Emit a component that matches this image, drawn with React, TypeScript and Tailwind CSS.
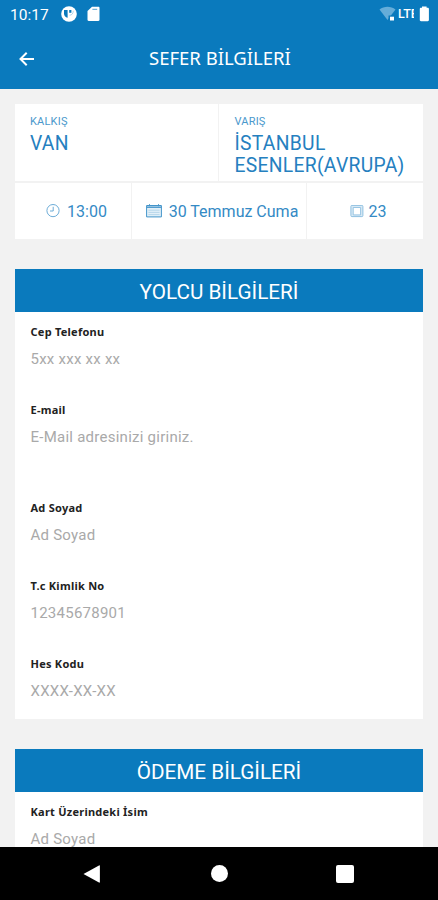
import React from 'react';

interface FieldProps {
  label: string;
  placeholder: string;
  className?: string;
}

const Field: React.FC<FieldProps> = ({ label, placeholder, className = '' }) => (
  <div className={`h-[78px] pl-[15.5px] ${className}`}>
    <p className="h-4 font-['Noto_Sans',sans-serif] text-[11px] leading-4 font-bold tracking-[0.25px] text-[#222222]">{label}</p>
    <p className="mt-[7px] h-6 text-[15px] leading-6 tracking-[0.25px] text-[#a9a9a9]">{placeholder}</p>
  </div>
);

const SectionTitle: React.FC<{ children: React.ReactNode }> = ({ children }) => (
  <h2 className="flex h-[43px] items-center justify-center bg-[#0a7abd] pt-[3px] text-[20.7px] leading-6 text-white">
    {children}
  </h2>
);

// Android status bar
const StatusBar = () => (
  <div className="flex h-7 items-center pl-[10px] text-white">
    <span className="w-[51px] pt-px text-[15.5px] leading-5">10:17</span>
    <svg className="h-4 w-4" viewBox="0 0 16 16" fill="none">
      <circle cx="8" cy="8" r="7.8" fill="#fff" />
      <path d="M3 4h3.6v7.7A4.3 4.3 0 0 1 3 7.6z" fill="#0a7abd" />
      <path d="M8.2 4h2.2v2.8H8.2z" fill="#0a7abd" />
      <path d="M8.6 9.2c2.2 0 3.6-1.6 3.7-4.4" stroke="#0a7abd" strokeWidth="0.5" opacity="0.6" />
    </svg>
    <svg className="ml-[10px] h-4 w-[13px]" viewBox="0 0 13 16">
      <path d="M5 .7h6.4c.6 0 1.1.5 1.1 1.1v12c0 .7-.5 1.2-1.1 1.2H1.7c-.7 0-1.2-.5-1.2-1.2V5z" fill="#fff" />
      <path d="M5.4 3.3h4.8" stroke="#0a7abd" strokeWidth="1" opacity="0.7" />
    </svg>
    <div className="ml-auto flex items-center pr-[8px]">
      <svg className="h-4 w-[17px]" viewBox="0 0 17 16">
        <path d="M.5 3.4C5-.2 12-.2 16.5 3.4L8.5 14z" fill="#65add9" />
        <path d="M9.5 9.5h6v6h-6z" fill="#0a7abd" />
        <path d="M11 10.7h4v3.8h-4z" fill="#fff" />
      </svg>
      <span className="ml-[2px] w-4 overflow-hidden text-[12.5px] leading-4 font-medium">LTE</span>
      <svg className="ml-[5px] h-4 w-[11px]" viewBox="0 0 11 16">
        <path d="M3 .4h4.6v1.4h1.1c.7 0 1.2.5 1.2 1.2v11c0 .7-.5 1.2-1.2 1.2H2c-.7 0-1.2-.5-1.2-1.2V3c0-.7.5-1.2 1.2-1.2h1z" fill="#fff" />
      </svg>
    </div>
  </div>
);

const ClockIcon = () => (
  <svg className="h-[14px] w-[14px]" viewBox="0 0 14 14" fill="none" stroke="#5ca3d2" strokeWidth="0.9">
    <circle cx="7" cy="6.6" r="6.1" />
    <path d="M7.2 2.8v4.2H4" />
  </svg>
);

const CalendarIcon = () => (
  <svg className="h-[14px] w-4" viewBox="0 0 16 14" fill="none" stroke="#4394ca">
    <path d="M.6 1.5h14.8v11.4H.6z" fill="#e3f0f8" />
    <path d="M.6 3.2h14.8" strokeWidth="1.4" />
    <path d="M3.5.2v2M12.5.2v2" />
    <path d="M2.4 6.2h11.2M2.4 8.4h11.2M2.4 10.6h11.2" strokeWidth="0.8" opacity="0.35" />
  </svg>
);

// Two stacked rounded squares
const SeatIcon = () => (
  <svg className="h-[13px] w-[14px]" viewBox="0 0 14 13" fill="none" stroke="#8fc0e0">
    <rect x="0.9" y="0.4" width="12" height="11.2" rx="1" fill="#d9eaf5" />
    <path d="M3.2 2.5h7.4v7.4H3.2z" strokeWidth="0.9" fill="#fff" />
  </svg>
);

const TripCard = () => (
  <div className="w-[408px] text-[#2580bf]">
    <div className="flex h-[77px] gap-px">
      <div className="w-[203px] bg-white pt-[10px] pl-[15px]">
        <p className="h-[19px] text-[11px] leading-4 tracking-[0.2px] text-[#4a98cc]">KALKIŞ</p>
        <p className="text-[19.3px] leading-[22px] tracking-[0.3px]">VAN</p>
      </div>
      <div className="flex-1 bg-white pt-[10px] pl-[15.5px]">
        <p className="h-[19px] text-[11px] leading-4 tracking-[0.2px] text-[#4a98cc]">VARIŞ</p>
        <p className="text-[19.3px] leading-[22px] tracking-[0.3px]">İSTANBUL ESENLER(AVRUPA)</p>
      </div>
    </div>
    <div className="mt-[2px] flex h-14 gap-px text-[16px] leading-5 text-[#348ac5]">
      <div className="flex w-[116px] items-center justify-center gap-[7px] bg-white pl-[7px]">
        <ClockIcon />
        <span className="pt-px">13:00</span>
      </div>
      <div className="flex w-[174px] items-center justify-center gap-[7px] bg-white pl-[6px]">
        <CalendarIcon />
        <span className="pt-px whitespace-nowrap">30 Temmuz Cuma</span>
      </div>
      <div className="flex flex-1 items-center justify-center gap-[5px] bg-white pl-[6px]">
        <SeatIcon />
        <span className="pt-px">23</span>
      </div>
    </div>
  </div>
);

const NavigationBar = () => (
  <div className="flex h-[53px] shrink-0 items-center bg-black pl-[83px]">
    <svg className="h-[18px] w-[17px]" viewBox="0 0 17 18">
      <path d="M.5 9 16 .4c.5-.2.9 0 .9.5v16.2c0 .5-.4.7-.9.5z" fill="#fff" />
    </svg>
    <div className="ml-[111px] h-[17px] w-[17px] rounded-full bg-white" />
    <div className="ml-[108px] h-[18px] w-[18px] rounded-[2px] bg-white" />
  </div>
);

const App: React.FC = () => {
  return (
    <div className="flex h-[900px] w-[438px] flex-col overflow-hidden bg-[#f2f2f2] font-[Roboto,sans-serif]">
      <header className="h-[89px] shrink-0 bg-[#0a7abd]">
        <StatusBar />
        <div className="flex h-[61px] items-center pl-[19px]">
          <svg className="h-[14px] w-[15px]" viewBox="0 0 15 14" fill="none" stroke="#fff" strokeWidth="2">
            <path d="M7.7.8 1.5 7l6.2 6.2M1.5 7H15" />
          </svg>
          <h1 className="ml-[115px] pb-px font-['Noto_Sans',sans-serif] text-[18.5px] leading-6 whitespace-nowrap text-white">SEFER BİLGİLERİ</h1>
        </div>
      </header>

      <main className="min-h-0 flex-1 overflow-hidden px-[15px] pt-[15px]">
        <TripCard />

        <section className="mt-[30px] h-[450px] w-[408px] bg-white">
          <SectionTitle>YOLCU BİLGİLERİ</SectionTitle>
          <div className="pt-3">
            <Field label="Cep Telefonu" placeholder="5xx xxx xx xx" />
            <Field label="E-mail" placeholder="E-Mail adresinizi giriniz." className="mb-5" />
            <Field label="Ad Soyad" placeholder="Ad Soyad" />
            <Field label="T.c Kimlik No" placeholder="12345678901" />
            <Field label="Hes Kodu" placeholder="XXXX-XX-XX" />
          </div>
        </section>

        <section className="mt-[30px] w-[408px] bg-white">
          <SectionTitle>ÖDEME BİLGİLERİ</SectionTitle>
          <div className="pt-3">
            <Field label="Kart Üzerindeki İsim" placeholder="Ad Soyad" />
          </div>
        </section>
      </main>

      <NavigationBar />
    </div>
  );
};

export default App;
